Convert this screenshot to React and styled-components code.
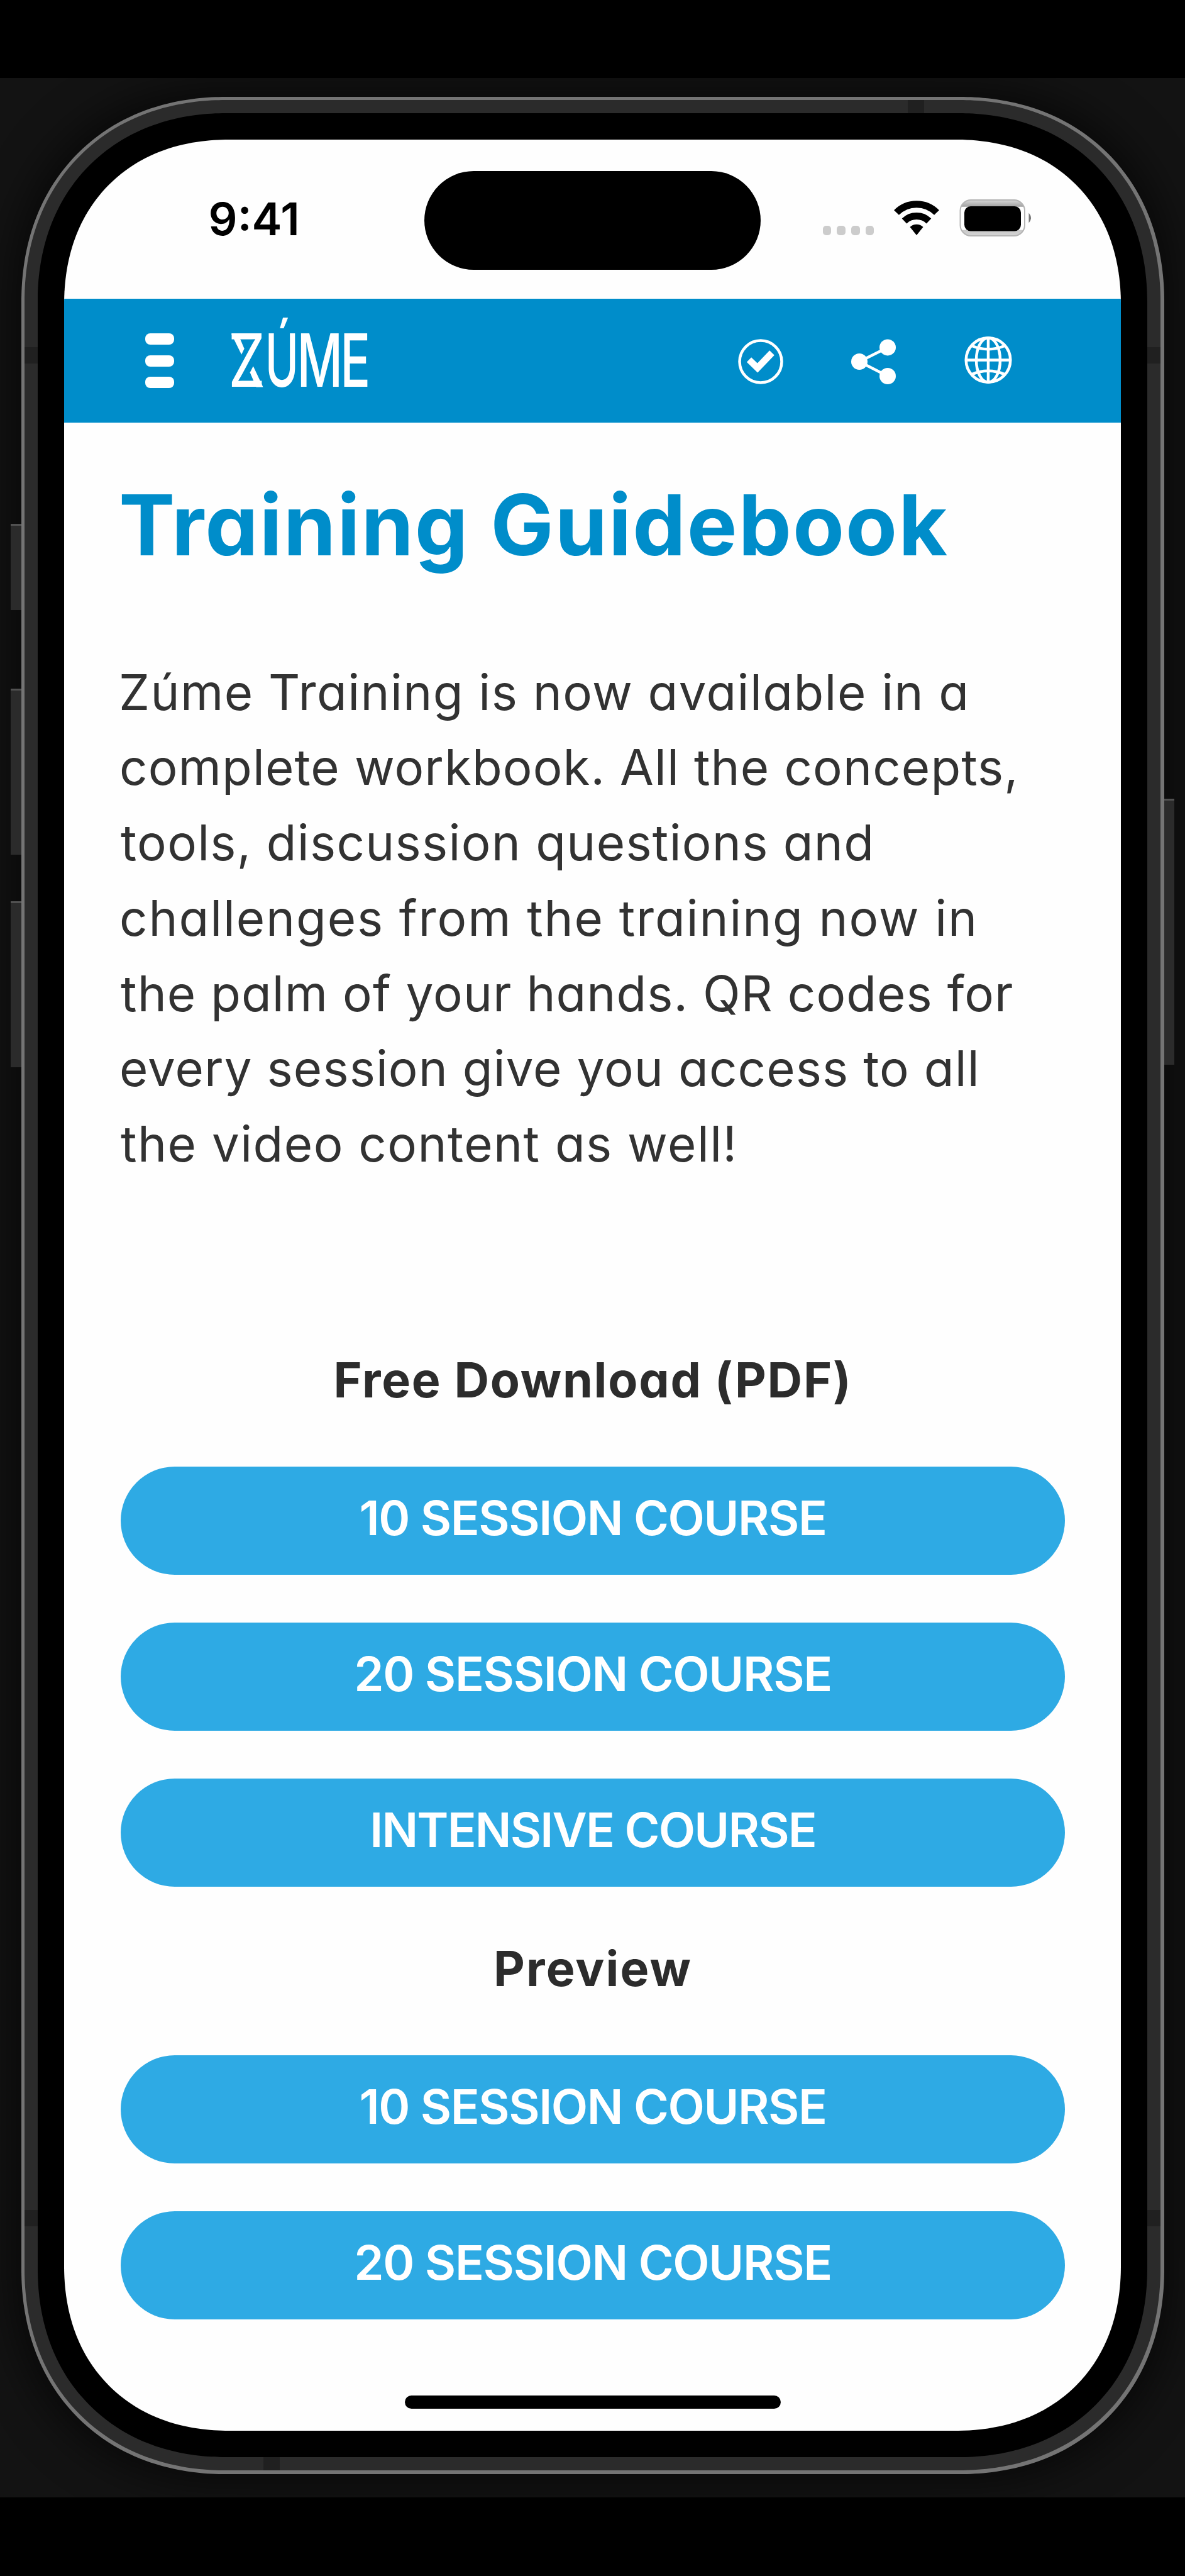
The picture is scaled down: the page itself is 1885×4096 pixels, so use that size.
import React from "react";
import styled, { createGlobalStyle } from "styled-components";

const GlobalStyle = createGlobalStyle`
  *, *::before, *::after { box-sizing: border-box; }
  html, body { margin: 0; padding: 0; background: #000; }
  body { font-family: Inter, "Open Sans", "Liberation Sans", sans-serif; }
`;

const Page = styled.main`
  width: 1885px;
  height: 4096px;
  padding: 124px 0 125px;
  background: #000;
  overflow: hidden;
`;

const Backdrop = styled.div`
  display: flex;
  height: 3847px;
  padding-top: 29.5px;
  background: #131313;
  overflow: hidden;
`;

const Rail = styled.div`
  display: flex;
  flex-direction: column;
  flex: none;
  align-items: ${(p) => (p.$side === "left" ? "flex-end" : "flex-start")};
  width: ${(p) => (p.$side === "left" ? 33.6 : 33)}px;
  padding-top: ${(p) => p.$offset}px;
  position: relative;
  z-index: 1;
`;

const SideButton = styled.div`
  width: 16.6px;
  height: ${(p) => p.$length}px;
  margin-bottom: ${(p) => p.$gap || 0}px;
  background: #2b2b2b;
  border-top: 3px solid #515151;
`;

const Edge = styled.div`
  position: relative;
  flex: none;
  width: 1818px;
  height: 3780px;
  padding: 5.5px;
  border-radius: 325px;
  corner-shape: superellipse(1.1);
  background: #747474;
  box-shadow: 0 0 70px 10px rgba(0, 0, 0, 0.62);
`;

const Band = styled.div`
  height: 100%;
  padding: 21px;
  border-radius: 320px;
  corner-shape: superellipse(1.1);
  background: #2b2b2b;
`;

const AntennaLine = styled.i`
  position: absolute;
  background: #202020;
  ${(p) => p.$edge}: 5.5px;
  ${(p) =>
    p.$edge === "left" || p.$edge === "right"
      ? `top: ${p.$at}px; width: 21px; height: 25.5px;`
      : `left: ${p.$at}px; width: 26px; height: 21px;`}
`;

const Bezel = styled.div`
  height: 100%;
  padding: 42px;
  border-radius: 299px;
  corner-shape: superellipse(1.1);
  background: #000;
`;

const Screen = styled.div`
  display: flex;
  flex-direction: column;
  height: 100%;
  border-radius: 262px;
  corner-shape: superellipse(1.12);
  background: #fefefe;
  overflow: hidden;
`;

const StatusBar = styled.div`
  display: grid;
  grid-template-columns: 572.5px 535px 1fr;
  flex: none;
  height: 253px;
  padding-top: 49.5px;
`;

const Clock = styled.time`
  height: 157px;
  padding-left: 229.5px;
  line-height: 152px;
  font-size: 72px;
  font-weight: 600;
  color: #000;
`;

const Island = styled.div`
  height: 157px;
  border-radius: 79px;
  background: #000;
`;

const StatusIcons = styled.div`
  display: flex;
  align-items: flex-start;
  padding: 42px 0 0 99px;
`;

const CellularDots = styled.div`
  display: flex;
  gap: 9px;
  width: 113.5px;
  padding-top: 45.5px;
`;

const Dot = styled.i`
  width: 13.7px;
  height: 15px;
  border-radius: 5px;
  background: #ccc;
`;

const WifiGlyph = styled.svg`
  width: 72px;
  height: 56px;
  margin: 4.5px 32px 0 0;
`;

const BatteryGlyph = styled.svg`
  width: 120px;
  height: 62px;
  margin-top: 2px;
`;

const NavBar = styled.header`
  display: flex;
  align-items: center;
  flex: none;
  height: 197px;
  padding-left: 128.5px;
  background: #008dca;
`;

const MenuButton = styled.div`
  display: flex;
  flex-direction: column;
  gap: 16.3px;
  width: 46px;
  margin-right: 86px;
`;

const MenuBar = styled.i`
  height: 18px;
  border-radius: 8px;
  background: #fff;
`;

const LogoMark = styled.svg`
  width: 240px;
  height: 150px;
  margin-right: 565.4px;
  overflow: visible;
`;

const NavIcon = styled.svg`
  width: 84px;
  height: 84px;
  margin-right: ${(p) => p.$gap || 0}px;
  fill: none;
  stroke: #fff;
`;

const Content = styled.section`
  display: flex;
  flex-direction: column;
  flex: 1;
  padding: 82px 89px 0 90px;
`;

const Title = styled.h1`
  margin: 0 0 126.6px -3px;
  font-size: 134px;
  line-height: 160px;
  font-weight: 700;
  letter-spacing: 1.95px;
  color: #008dca;
  white-space: nowrap;
  font-feature-settings: "cv11";
`;

const Intro = styled.p`
  margin: 0 0 255.5px;
  font-size: 78px;
  line-height: 119.75px;
  color: #323232;
  font-feature-settings: "cv11";
`;

const Line = styled.span`
  display: block;
  width: max-content;
  white-space: nowrap;
  letter-spacing: ${(p) => p.$track}px;
  margin-left: ${(p) => p.$nudge}px;
`;

const Subheading = styled.h2`
  margin: ${(p) => p.$above || 0}px 0 77.3px;
  font-size: 77px;
  line-height: 120px;
  font-weight: 700;
  letter-spacing: ${(p) => p.$track}px;
  text-align: center;
  color: #2c2c2c;
  font-feature-settings: "cv11";
`;

const ButtonStack = styled.div`
  display: flex;
  flex-direction: column;
  gap: 76.4px;
`;

const PillButton = styled.a`
  display: flex;
  align-items: center;
  justify-content: center;
  height: 172px;
  padding-bottom: 10px;
  border-radius: 86px;
  background: #2eaae4;
  color: #fff;
  font-size: 76px;
  font-weight: 600;
  letter-spacing: ${(p) => p.$track}px;
  white-space: nowrap;
`;

const HomeIndicator = styled.div`
  align-self: center;
  width: 598px;
  height: 21.5px;
  margin-top: auto;
  margin-bottom: 35px;
  border-radius: 11px;
  background: #000;
`;

const INTRO_LINES = [
  { text: "Zúme Training is now available in a", track: 1.42, nudge: -3 },
  { text: "complete workbook. All the concepts,", track: 1.1, nudge: -2 },
  { text: "tools, discussion questions and", track: 1.27, nudge: 0 },
  { text: "challenges from the training now in", track: 1.87, nudge: -2 },
  { text: "the palm of your hands. QR codes for", track: 1.03, nudge: 0 },
  { text: "every session give you access to all", track: 1.07, nudge: -2 },
  { text: "the video content as well!", track: 1.44, nudge: 0 },
];

const TEN = { label: "10 SESSION COURSE", track: -1.42 };
const TWENTY = { label: "20 SESSION COURSE", track: -1.35 };
const INTENSIVE = { label: "INTENSIVE COURSE", track: -1.82 };

function Wifi() {
  return (
    <WifiGlyph viewBox="0 0 72 56" fill="none" stroke="#000">
      <path d="M4 20A45 45 0 0 1 68 20" strokeWidth="11" />
      <path d="M16.5 33.5A28 28 0 0 1 55.5 33.5" strokeWidth="11" />
      <path d="M36 56L25.5 43A15 15 0 0 1 46.5 43Z" fill="#000" stroke="none" />
    </WifiGlyph>
  );
}

function Battery() {
  return (
    <BatteryGlyph viewBox="0 0 120 62">
      <defs>
        <linearGradient id="shell" x1="0" y1="0" x2="0" y2="1">
          <stop offset="0" stopColor="#d8d8d8" />
          <stop offset="0.18" stopColor="#a2a2a2" />
          <stop offset="0.2" stopColor="#fff" />
          <stop offset="0.83" stopColor="#fff" />
          <stop offset="0.84" stopColor="#c8c8c8" />
          <stop offset="1" stopColor="#d4d4d4" />
        </linearGradient>
      </defs>
      <rect x="1.5" y="2" width="102.5" height="57" rx="17" fill="url(#shell)" stroke="#b4b4b4" strokeWidth="2" />
      <rect x="8" y="12" width="90" height="39.5" rx="10" fill="#000" />
      <path d="M110.500 22.500q7 8 0 16z" fill="#777" />
    </BatteryGlyph>
  );
}

function Logo() {
  return (
    <LogoMark viewBox="0 0 240 150" fill="#fff" fontFamily="Inter, sans-serif" fontSize="117" fontWeight="500">
      <text x="0" y="116.5" fontWeight="400" transform="scale(0.8 1)">Z</text>
      <text x="95.5" y="116.5" transform="scale(0.615 1)">Ú</text>
      <text y="116.5" transform="scale(0.68 1)">
        <tspan x="161">M</tspan>
        <tspan x="262">E</tspan>
      </text>
      <path d="M4.800 31.500L15.500 31.500L25.600 55.400L21.100 64.800Z" />
      <path d="M55.500 116.500L44.500 116.500L34.700 93.200L39.800 83.200Z" />
    </LogoMark>
  );
}

function NavIcons() {
  return (
    <>
      <NavIcon viewBox="0 0 84 84" $gap={95.2}>
        <circle cx="42" cy="43" r="33.5" strokeWidth="4.5" />
        <path d="M23.5 40L37 53L60 29" strokeWidth="10.5" />
      </NavIcon>
      <NavIcon viewBox="0 0 84 84" $gap={99.1}>
        <path d="M65 20.4L20 43L65 66" strokeWidth="4.5" />
        <g fill="#fff" stroke="none">
          <circle cx="20" cy="43" r="13" />
          <circle cx="65" cy="20.4" r="13" />
          <circle cx="65" cy="66" r="13" />
        </g>
      </NavIcon>
      <NavIcon viewBox="0 0 84 84" strokeWidth="4.5">
        <circle cx="42" cy="40.5" r="35.3" />
        <ellipse cx="42" cy="40.5" rx="19" ry="35.3" />
        <path d="M42 5V76M6.7 40.5H77.3" />
        <path d="M15 17.5Q42 29 69 17.5M15 63.5Q42 52 69 63.5" />
      </NavIcon>
    </>
  );
}

function Buttons({ items }) {
  return (
    <ButtonStack>
      {items.map((item) => (
        <PillButton key={item.label} $track={item.track}>
          {item.label}
        </PillButton>
      ))}
    </ButtonStack>
  );
}

export default function App() {
  return (
    <>
      <GlobalStyle />
      <Page>
        <Backdrop>
          <Rail $side="left" $offset={679.5}>
            <SideButton $length={137} $gap={124.5} />
            <SideButton $length={264.5} $gap={74} />
            <SideButton $length={264} />
          </Rail>
          <Edge>
            <Band>
              <Bezel>
                <Screen>
                  <StatusBar>
                    <Clock>9:41</Clock>
                    <Island />
                    <StatusIcons>
                      <CellularDots>
                        <Dot />
                        <Dot />
                        <Dot />
                        <Dot />
                      </CellularDots>
                      <Wifi />
                      <Battery />
                    </StatusIcons>
                  </StatusBar>
                  <NavBar>
                    <MenuButton>
                      <MenuBar />
                      <MenuBar />
                      <MenuBar />
                    </MenuButton>
                    <Logo />
                    <NavIcons />
                  </NavBar>
                  <Content>
                    <Title>Training Guidebook</Title>
                    <Intro>
                      {INTRO_LINES.map((line) => (
                        <Line key={line.text} $track={line.track} $nudge={line.nudge}>
                          {line.text}
                        </Line>
                      ))}
                    </Intro>
                    <Subheading $track={1.75}>Free Download (PDF)</Subheading>
                    <Buttons items={[TEN, TWENTY, INTENSIVE]} />
                    <Subheading $above={70} $track={2.15}>
                      Preview
                    </Subheading>
                    <Buttons items={[TEN, TWENTY]} />
                    <HomeIndicator />
                  </Content>
                </Screen>
              </Bezel>
            </Band>
            <AntennaLine $edge="left" $at={398.5} />
            <AntennaLine $edge="right" $at={398.5} />
            <AntennaLine $edge="left" $at={3360.5} />
            <AntennaLine $edge="right" $at={3360.5} />
            <AntennaLine $edge="top" $at={1410.5} />
            <AntennaLine $edge="bottom" $at={385.5} />
          </Edge>
          <Rail $side="right" $offset={1116.5}>
            <SideButton $length={423} />
          </Rail>
        </Backdrop>
      </Page>
    </>
  );
}
